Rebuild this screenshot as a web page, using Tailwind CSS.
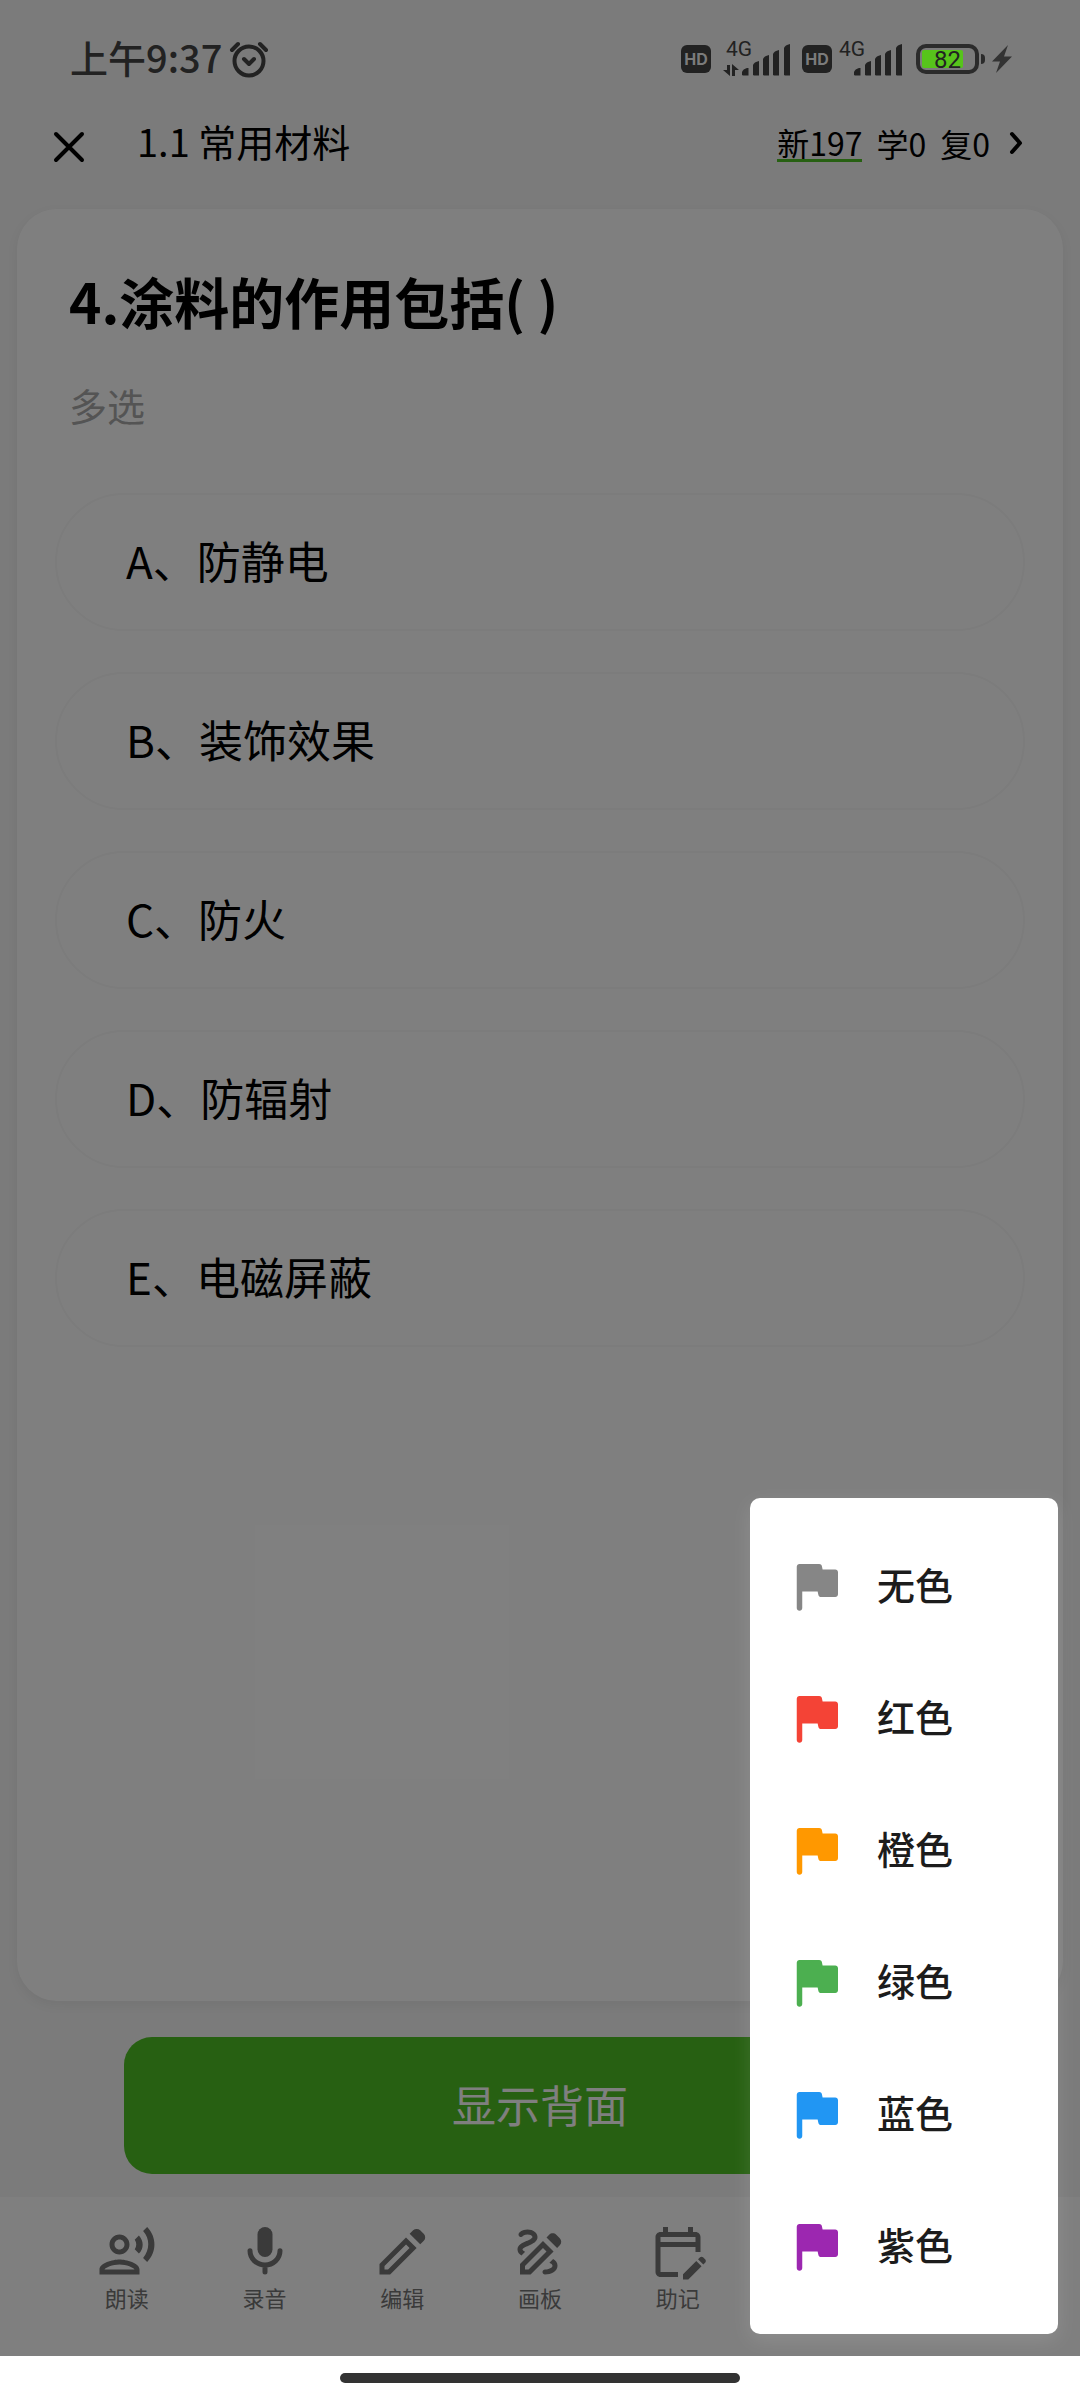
<!DOCTYPE html>
<html lang="zh-CN">
<head>
<meta charset="utf-8">
<meta name="viewport" content="width=device-width, initial-scale=1">
<title>1.1 常用材料</title>
<script src="https://cdn.jsdelivr.net/npm/@tailwindcss/browser@4"></script>
</head>
<body class="font-['Noto_Sans_CJK_SC',sans-serif] text-black bg-white">
<svg class="hidden" aria-hidden="true">
  <symbol id="flag" viewBox="0 0 24 24"><path d="M7 14v6q0 .425-.288.713T6 21q-.425 0-.713-.288T5 20V5q0-.425.288-.713T6 4h7.175q.35 0 .625.225t.35.575L14.4 6H19q.425 0 .713.288T20 7v8q0 .425-.288.713T19 16h-5.175q-.35 0-.625-.225t-.35-.575L12.6 14H7Z"/></symbol>
  <symbol id="bars" viewBox="0 0 48 32"><path d="M0 31v-3q1-3 5-4h1.500v7.500H1zM11 31V21q1-3 6-4v14.500h-5zM21 31V15q1-3 6-4v20.500h-5zM31 31V10q1-3 6-4v25.500h-5zM42 31V4q1-3 6-4v31.500h-5z"/></symbol>
</svg>
<div class="min-h-screen flex flex-col">
  <div class="relative flex-1 flex flex-col bg-[#f6f6f6]">

    <!-- status bar, drawn above the scrim -->
    <div class="relative z-20 h-[100px] pt-[18px] pl-[70px] pr-[68px] flex items-center justify-between text-[#222]">
      <div class="flex items-center gap-[7px]">
        <span class="pb-1 text-[38px] leading-[40px] font-medium">上午9:37</span>
        <svg class="w-10 h-10" viewBox="0 0 40 40" fill="none" stroke="currentColor" stroke-width="4" stroke-linecap="round" stroke-linejoin="round"><circle cx="20" cy="22" r="14.500"/><path d="m15 20 5 5 5-5M3 11l6-6M37 11l-6-6"/></svg>
      </div>
      <div class="flex items-center">
        <span class="w-[30px] h-7 rounded-md bg-[#222] text-[#7b7b7b] text-[16px] leading-7 font-bold text-center font-['Inter',sans-serif]">HD</span>
        <div class="relative ml-3 w-[67px] h-10">
          <span class="absolute left-[3px] top-0 text-[21px] leading-5 font-['Roboto',sans-serif]">4G</span>
          <svg class="absolute left-0 bottom-[3px] w-4 h-3" viewBox="0 0 16 12" fill="currentColor"><path d="M4 1h3v11L0 6h4zM9 12h3V6h4L9 0z"/></svg>
          <svg class="absolute right-0 bottom-[3px] w-12 h-8" fill="currentColor"><use href="#bars"/></svg>
        </div>
        <span class="ml-3 w-[30px] h-7 rounded-md bg-[#222] text-[#7b7b7b] text-[16px] leading-7 font-bold text-center font-['Inter',sans-serif]">HD</span>
        <div class="relative ml-1 w-[66px] h-10">
          <span class="absolute left-[3px] top-0 text-[21px] leading-5 font-['Roboto',sans-serif]">4G</span>
          <svg class="absolute right-0 bottom-[3px] w-12 h-8" fill="currentColor"><use href="#bars"/></svg>
        </div>
        <div class="relative ml-[14px] w-[63px] h-[30px] border-4 border-[#2b2b2b] rounded-[10px] p-[2px]">
          <div class="w-[41px] h-[18px] rounded-xs bg-[#57c41b]"></div>
          <span class="absolute inset-0 text-center text-[24px] leading-[24px] font-['Roboto',sans-serif]">82</span>
        </div>
        <div class="ml-[2px] w-1 h-[10px] rounded-r-full bg-[#2b2b2b]"></div>
        <svg class="ml-[7px] w-5 h-7" viewBox="0 0 20 28" fill="#333"><path d="M16 0 0 16.500h8L4 28 20 11.500h-8z"/></svg>
      </div>
    </div>

    <header class="h-[86px] pl-[49px] pr-[52px] flex items-center">
      <button class="w-10 h-10 mt-2" aria-label="关闭"><svg class="w-10 h-10" viewBox="0 0 40 40" fill="none" stroke="currentColor" stroke-width="4" stroke-linecap="round"><path d="m7 7 26 26M33 7 7 33"/></svg></button>
      <h1 class="ml-12 pb-1 text-[38px] leading-[48px]">1.1 常用材料</h1>
      <a href="#" class="ml-auto flex items-center gap-[14px] text-[32px] leading-[34px]">
        <span class="border-b-[3px] border-[#4ec024]">新197</span>
        <span>学0</span>
        <span>复0</span>
        <svg class="w-6 h-6" viewBox="0 0 24 24" fill="none" stroke="currentColor" stroke-width="4" stroke-linecap="round" stroke-linejoin="round"><path d="m8 3 8 9-8 9"/></svg>
      </a>
    </header>

    <main class="flex-1 mt-[23px] mx-[17px] px-[38px] pt-[58px] rounded-[40px] bg-white shadow-[0_4px_12px_rgba(0,0,0,0.06)]">
      <h2 class="px-[14px] text-[55px] leading-[66px] font-bold">4.涂料的作用包括( )</h2>
      <p class="px-[14px] mt-12 text-[38px] leading-[48px] text-[#a8a8a8]">多选</p>
      <div class="mt-16 flex flex-col gap-[41px]">
        <button class="h-[138px] px-[69px] pb-1 rounded-full border-2 border-[#f8f8f8] text-left text-[44px]">A、防静电</button>
        <button class="h-[138px] px-[69px] pb-1 rounded-full border-2 border-[#f8f8f8] text-left text-[44px]">B、装饰效果</button>
        <button class="h-[138px] px-[69px] pb-1 rounded-full border-2 border-[#f8f8f8] text-left text-[44px]">C、防火</button>
        <button class="h-[138px] px-[69px] pb-1 rounded-full border-2 border-[#f8f8f8] text-left text-[44px]">D、防辐射</button>
        <button class="h-[138px] px-[69px] pb-1 rounded-full border-2 border-[#f8f8f8] text-left text-[44px]">E、电磁屏蔽</button>
      </div>
    </main>

    <button class="mx-[124px] mt-9 mb-[23px] h-[137px] pb-1 rounded-[28px] bg-[#4ec024] text-white text-[44px]">显示背面</button>

    <nav class="h-[159px] px-[58px] pt-[25px] grid grid-cols-7 items-start bg-white text-[#747474] text-[22px] leading-[30px]">
      <button class="flex flex-col items-center">
        <svg class="w-[60px] h-[60px]" viewBox="0 0 24 24" fill="currentColor"><path d="M9 13c2.210 0 4-1.790 4-4s-1.790-4-4-4-4 1.790-4 4 1.790 4 4 4zm0-6c1.100 0 2 .9 2 2s-.9 2-2 2-2-.9-2-2 .9-2 2-2zm0 8c-2.670 0-8 1.340-8 4v2h16v-2c0-2.660-5.330-4-8-4zm-6 4c.22-.72 3.310-2 6-2 2.700 0 5.800 1.290 6 2H3zM15.080 7.050c.84 1.180.84 2.710 0 3.890l1.680 1.690c2.020-2.020 2.020-5.070 0-7.270l-1.680 1.690zM20.070 2l-1.630 1.630c2.770 3.020 2.770 7.560 0 10.740L20.070 16c3.900-3.890 3.910-9.950 0-14z"/></svg>
        <span>朗读</span>
      </button>
      <button class="flex flex-col items-center">
        <svg class="w-[60px] h-[60px]" viewBox="0 0 24 24" fill="none" stroke="currentColor" stroke-width="2" stroke-linecap="round"><rect x="9" y="2" width="6" height="12" rx="3" fill="currentColor" stroke="none"/><path d="M6 11.500a6 5.700 0 0 0 12 0M12 17.500V20"/></svg>
        <span>录音</span>
      </button>
      <button class="flex flex-col items-center">
        <svg class="w-[60px] h-[60px]" viewBox="0 0 24 24" fill="currentColor"><path d="M5 19h1.400l8.625-8.625-1.400-1.400L5 17.600V19ZM19.300 8.925l-4.250-4.200 1.400-1.400q.575-.575 1.413-.575t1.412.575l1.400 1.400q.575.575.6 1.388t-.55 1.387L19.300 8.925ZM17.850 10.400 7.250 21H3v-4.250l10.600-10.600 4.250 4.250Z"/></svg>
        <span>编辑</span>
      </button>
      <button class="flex flex-col items-center">
        <svg class="w-[60px] h-[60px]" viewBox="0 0 24 24" fill="currentColor"><path d="M18.850 10.390l1.060-1.060c.78-.78.78-2.050 0-2.830L18.500 5.090c-.78-.78-2.050-.78-2.830 0l-1.060 1.060 4.240 4.240zm-5.660-2.820L4 16.760V21h4.240l9.190-9.190-4.240-4.240zM7.410 19H6v-1.410l7.190-7.190 1.410 1.410L7.410 19zM19 17.500c0 2.190-2.540 3.500-5 3.500-.55 0-1-.45-1-1s.45-1 1-1c1.540 0 3-.73 3-1.500 0-.47-.48-.87-1.230-1.200l1.480-1.480c1.070.63 1.750 1.470 1.750 2.680zM4.580 13.350C3.610 12.790 3 12.060 3 11c0-1.800 1.890-2.630 3.560-3.360C7.590 7.180 9 6.560 9 6c0-.41-.78-1-2-1-1.260 0-1.800.61-1.830.64-.35.41-.98.46-1.400.12-.41-.34-.49-.95-.15-1.380C3.730 4.240 4.760 3 7 3s4 1.320 4 3c0 1.870-1.930 2.720-3.640 3.470C6.420 9.880 5 10.500 5 11c0 .31.43.6 1.070.86l-1.490 1.490z"/></svg>
        <span>画板</span>
      </button>
      <button class="flex flex-col items-center">
        <svg class="w-[60px] h-[60px]" viewBox="0 0 24 24" fill="currentColor" fill-rule="evenodd"><path d="M12 22H5c-1.110 0-2-.9-2-2V6c0-1.100.89-2 2-2h1V2h2v2h8V2h2v2h1c1.100 0 2 .9 2 2v6h-2v-2H5v10h7v2zM5 6v2h14V6H5zM22.130 16.990l.71-.71c.39-.39.39-1.020 0-1.410l-.71-.71c-.39-.39-1.020-.39-1.410 0l-.71.71 2.120 2.120zm-.71.71l-5.300 5.300H14v-2.120l5.300-5.300 2.120 2.120z"/></svg>
        <span>助记</span>
      </button>
    </nav>

    <div class="absolute inset-0 z-10 bg-black/50"></div>

    <!-- flag colour menu -->
    <div role="menu" class="absolute right-[22px] bottom-[22px] z-30 w-[308px] py-[22px] rounded-[10px] bg-white shadow-[0_6px_20px_rgba(255,255,255,0.12)] text-[#1c1c1c] text-[38px] font-medium">
      <button role="menuitem" class="w-full h-[132px] pl-[33px] flex items-center gap-7"><svg class="w-[66px] h-[66px] fill-[#868686]"><use href="#flag"/></svg><span class="pb-[6px]">无色</span></button>
      <button role="menuitem" class="w-full h-[132px] pl-[33px] flex items-center gap-7"><svg class="w-[66px] h-[66px] fill-[#f44336]"><use href="#flag"/></svg><span class="pb-[6px]">红色</span></button>
      <button role="menuitem" class="w-full h-[132px] pl-[33px] flex items-center gap-7"><svg class="w-[66px] h-[66px] fill-[#ff9800]"><use href="#flag"/></svg><span class="pb-[6px]">橙色</span></button>
      <button role="menuitem" class="w-full h-[132px] pl-[33px] flex items-center gap-7"><svg class="w-[66px] h-[66px] fill-[#4caf50]"><use href="#flag"/></svg><span class="pb-[6px]">绿色</span></button>
      <button role="menuitem" class="w-full h-[132px] pl-[33px] flex items-center gap-7"><svg class="w-[66px] h-[66px] fill-[#2196f3]"><use href="#flag"/></svg><span class="pb-[6px]">蓝色</span></button>
      <button role="menuitem" class="w-full h-[132px] pl-[33px] flex items-center gap-7"><svg class="w-[66px] h-[66px] fill-[#9c27b0]"><use href="#flag"/></svg><span class="pb-[6px]">紫色</span></button>
    </div>
  </div>

  <!-- gesture bar -->
  <div class="h-11 flex items-center justify-center bg-white">
    <div class="w-[37%] h-[10px] rounded-full bg-[#333]"></div>
  </div>
</div>
</body>
</html>
